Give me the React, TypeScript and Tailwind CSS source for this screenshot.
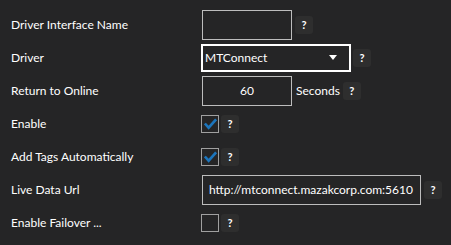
import React from "react";

function Help() {
  return (
    <span className="flex h-[18px] w-[18px] shrink-0 items-center justify-center rounded-[3px] bg-[#2e2e2e] text-[11px] font-bold leading-none text-white">
      ?
    </span>
  );
}

function Check({ checked }: { checked: boolean }) {
  return (
    <span className="flex h-[18px] w-[18px] shrink-0 items-center justify-center border border-[#a0a0a0]">
      {checked && (
        <svg viewBox="0 0 16 16" className="h-[15px] w-[15px]">
          <path
            d="M2 8 L6 12.5 L14 3.5"
            fill="none"
            stroke="#1c75bc"
            strokeWidth="2.8"
          />
        </svg>
      )}
    </span>
  );
}

const rows: { label: string; kind: string }[] = [
  { label: "Driver Interface Name", kind: "name" },
  { label: "Driver", kind: "driver" },
  { label: "Return to Online", kind: "online" },
  { label: "Enable", kind: "enable" },
  { label: "Add Tags Automatically", kind: "tags" },
  { label: "Live Data Url", kind: "url" },
  { label: "Enable Failover ...", kind: "failover" },
];

export default function App() {
  return (
    <div
      className="h-[245px] w-[451px] bg-[#252526] pl-[11px] pt-[8px] text-[12px] text-white"
      style={{ fontFamily: '"Segoe UI", Lato, sans-serif' }}
    >
      {rows.map((row) => (
        <div key={row.label} className="flex h-[33px] items-center">
          <span className="w-[190px] shrink-0">{row.label}</span>
          {row.kind === "name" && (
            <div className="flex items-center gap-[3px] pl-[1px]">
              <div className="h-[30px] w-[90px] shrink-0 border border-[#bdbdbd]" />
              <Help />
            </div>
          )}
          {row.kind === "driver" && (
            <div className="flex items-center gap-[2px]">
              <div className="flex h-[28px] w-[150px] shrink-0 items-center justify-between border-2 border-white pl-[2px] pr-[12px]">
                <span>MTConnect</span>
                <svg viewBox="0 0 8 5" className="h-[5px] w-[8px]">
                  <path d="M0 0 H8 L4 5 Z" fill="white" />
                </svg>
              </div>
              <Help />
            </div>
          )}
          {row.kind === "online" && (
            <div className="flex items-center pl-[1px]">
              <div className="flex h-[30px] w-[90px] shrink-0 items-center justify-center border border-[#bdbdbd]">
                60
              </div>
              <span className="ml-[4px]">Seconds</span>
              <span className="ml-[3px]">
                <Help />
              </span>
            </div>
          )}
          {(row.kind === "enable" || row.kind === "tags") && (
            <div className="flex items-center gap-[2px]">
              <Check checked />
              <Help />
            </div>
          )}
          {row.kind === "url" && (
            <div className="flex items-center gap-[3px] pl-[1px]">
              <div className="flex h-[30px] w-[219px] shrink-0 items-center overflow-hidden whitespace-nowrap border border-[#bdbdbd] pl-[6px]">
                http://mtconnect.mazakcorp.com:5610
              </div>
              <Help />
            </div>
          )}
          {row.kind === "failover" && (
            <div className="flex items-center gap-[2px]">
              <Check checked={false} />
              <Help />
            </div>
          )}
        </div>
      ))}
    </div>
  );
}
